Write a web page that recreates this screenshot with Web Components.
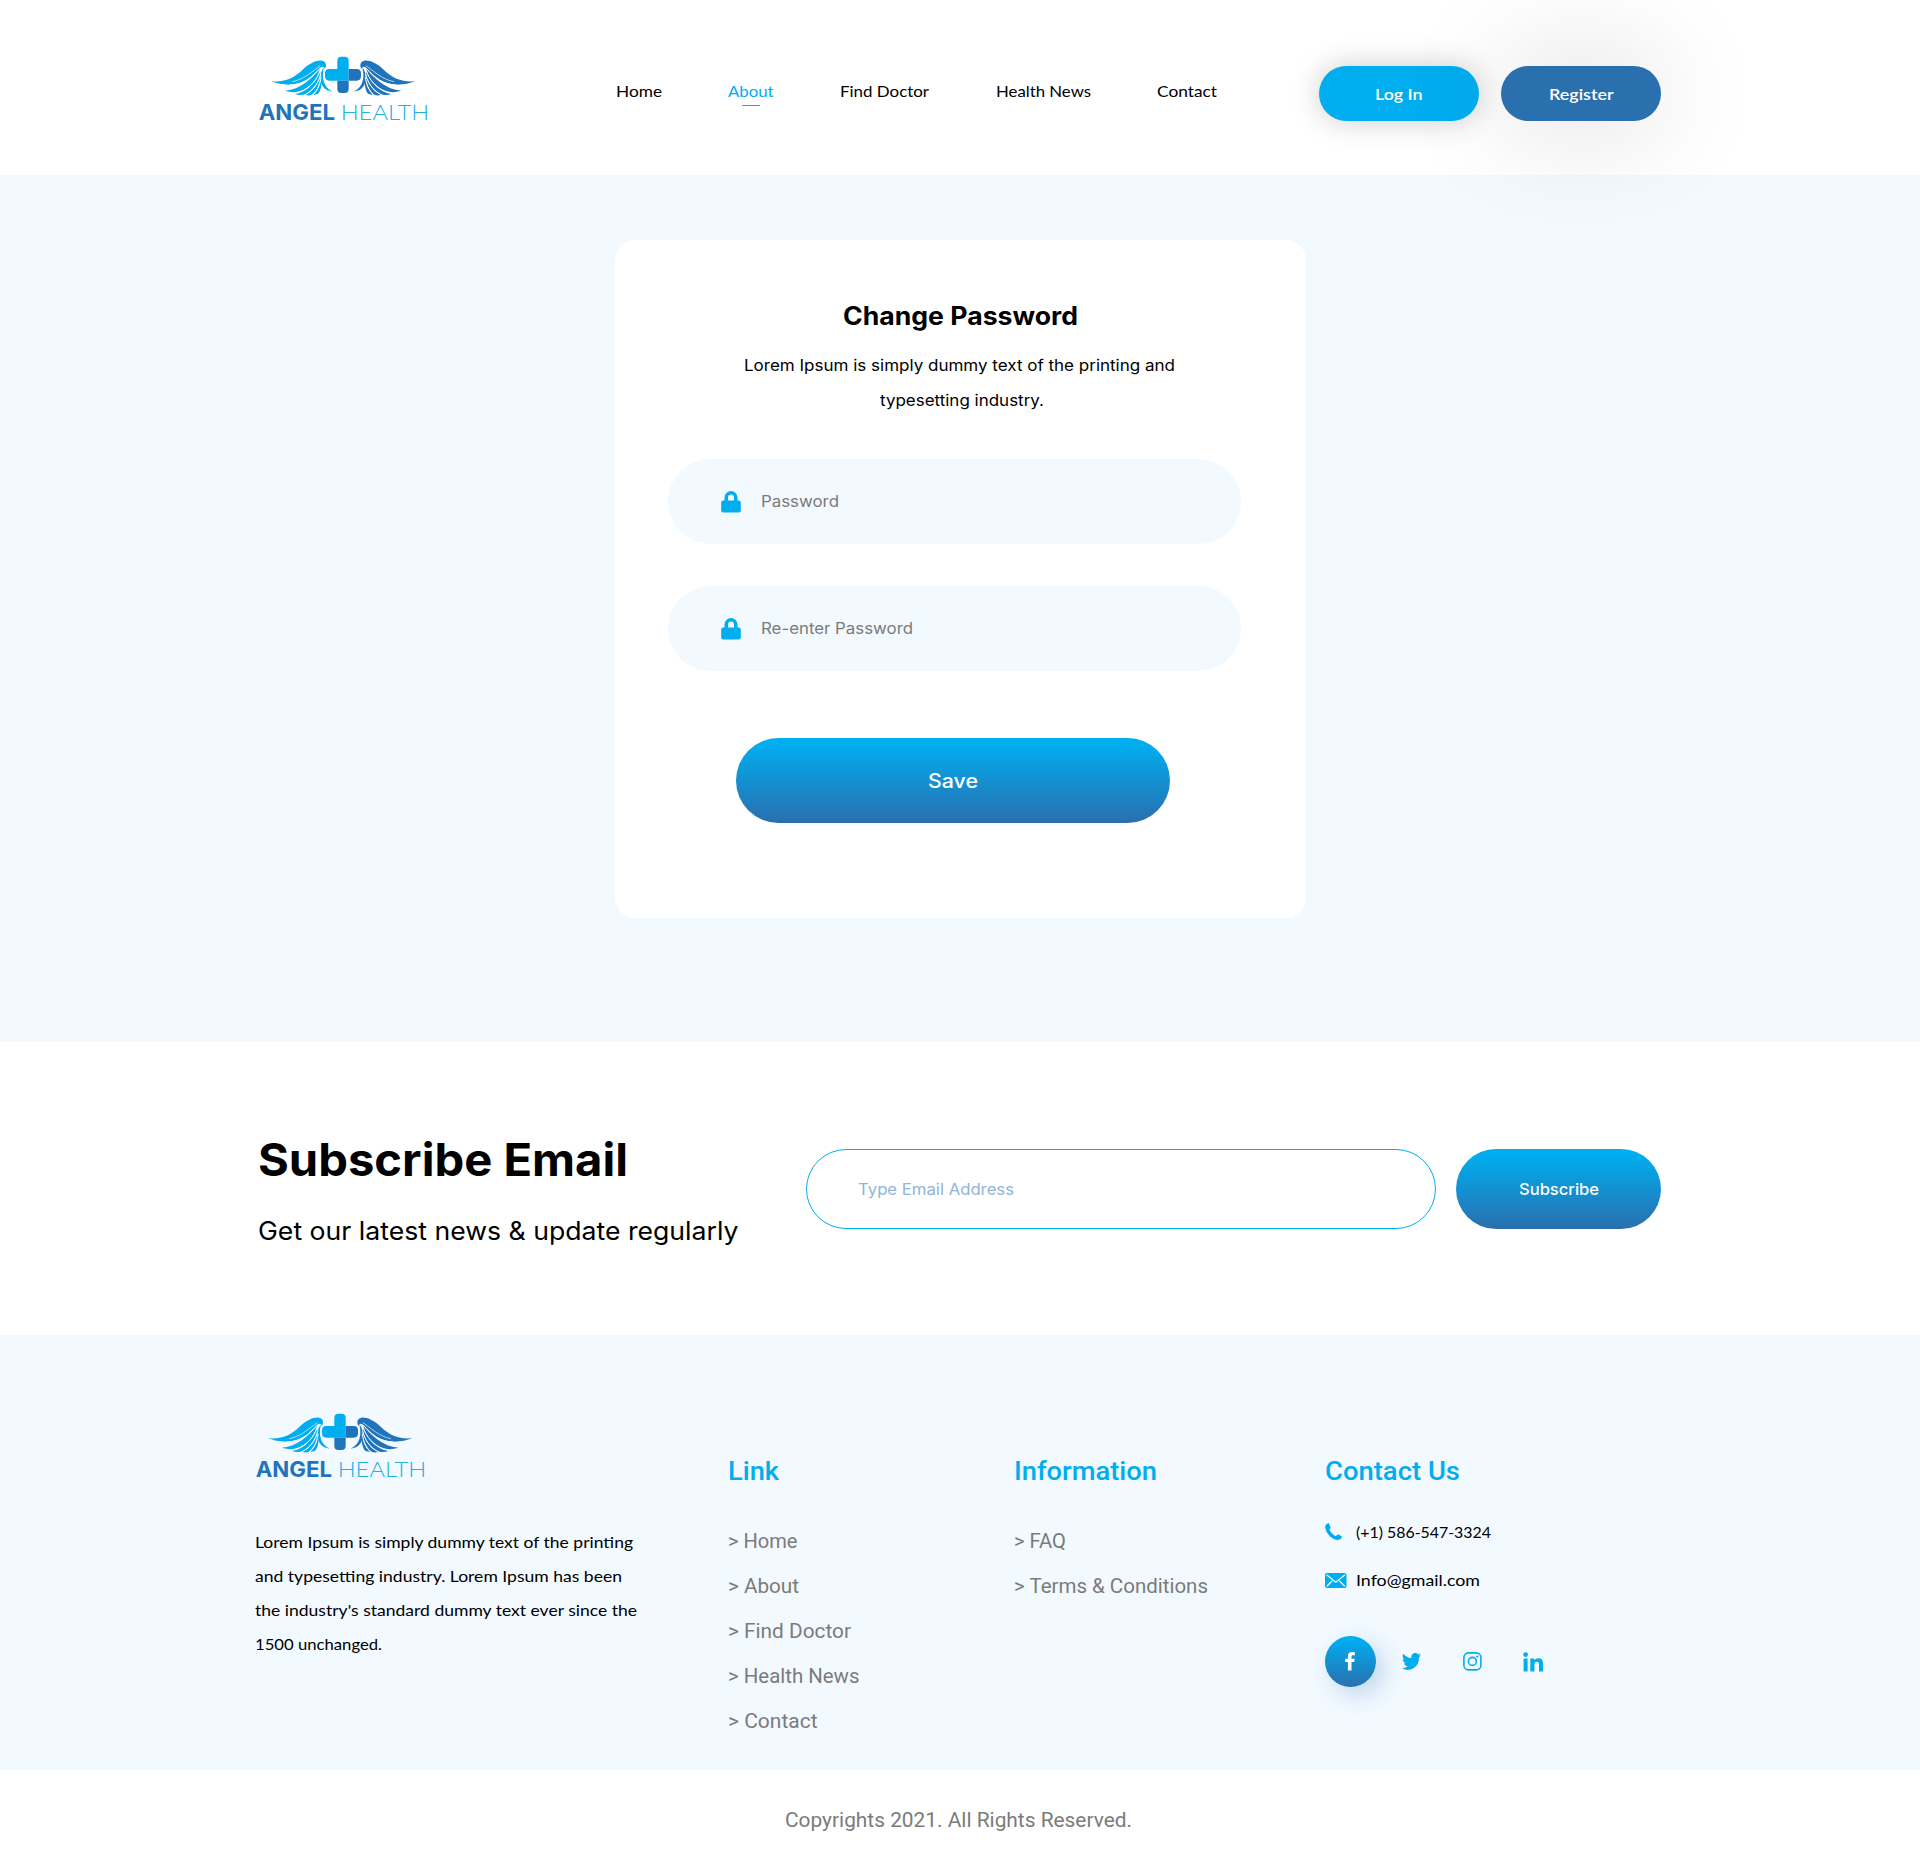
<!DOCTYPE html>
<html lang="en">
<head>
<meta charset="utf-8">
<title>Angel Health - Change Password</title>
<style>
  html, body { margin: 0; padding: 0; background: #fff; }
  body {
    --cyan: #00adef; --navy: #2a6fae; --pale: #f2f9ff; --grey: #7b7b7b;
    --quick: Lato, "Open Sans", sans-serif;
    --pop: Inter, "Open Sans", sans-serif;
    --rubik: Roboto, "Open Sans", sans-serif;
    color: #000; font: 16px/24px var(--quick);
  }
</style>
</head>
<body>
<angel-page></angel-page>
<script>
const define = (name, html, setup) => customElements.define(name, class extends HTMLElement {
  connectedCallback() {
    if (this.shadowRoot) return;
    this.attachShadow({ mode: 'open' }).innerHTML = html;
    if (setup) setup(this, this.shadowRoot);
  }
});

define('angel-page', `
<style>:host{display:flex;flex-direction:column;width:1920px;height:1870px;overflow:hidden}</style>
<site-header></site-header>
<password-section></password-section>
<subscribe-section></subscribe-section>
<site-footer></site-footer>
<copy-bar></copy-bar>`);

define('brand-logo', `
<style>:host{display:block;width:210px;height:100px} svg{display:block}
.a{font:700 65px Inter,sans-serif;fill:#1f74bb}.h{font:300 65px Lato,sans-serif;fill:#21b1e4}</style>
<svg width="210" height="100" viewBox="0 0 630 300">
  <defs>
    <g id="wing">
      <path d="M94 124C140 127 164 112 187 90C208 70 230 60 246 62C258 64 261 75 255 87C252 79 246 78 241 83C222 104 194 134 148 134C126 134 108 130 94 124Z"/>
      <path d="M135 152C182 148 214 116 240 86C238 106 212 147 173 155C160 158 148 156 135 152Z"/>
      <path d="M165 162C201 157 223 126 241 95C241 116 220 156 190 164C182 166 174 165 165 162Z"/>
      <path d="M194 165C221 155 232 132 242 106C244 126 231 156 214 165C208 167 202 166 194 165Z"/>
      <path d="M220 164C236 150 240 134 243 118C247 136 241 153 236 160C231 164 226 165 220 164Z"/>
      <path d="M252 82C244 112 250 143 278 155C255 153 236 136 243 100C245 92 248 87 252 82Z"/>
      <g fill="none" stroke="var(--logo-bg,#fff)" stroke-width="3" stroke-linecap="round">
        <path d="M150 135C190 134 216 112 239 86M176 157C211 147 232 118 240 92M194 165C224 150 236 126 242 104M218 165C234 150 240 130 243 112"/>
        <path d="M158 125C196 117 218 92 240 78" stroke-width="2"/>
      </g>
    </g>
  </defs>
  <use href="#wing" fill="#00adef"/>
  <use href="#wing" fill="#1f74bb" transform="translate(619 0) scale(-1 1)"/>
  <path fill="#00adef" d="M292 62q0-12 12-12h10q12 0 12 12v60H268q-13 0-13-13v-9q0-13 13-13h24z"/>
  <path fill="#1f74bb" d="M326 87h24q13 0 13 13v9q0 13-13 13h-24zM292 122h34v25q0 12-12 12h-10q-12 0-12-12z"/>
  <text class="a" x="56" y="240" textLength="229" lengthAdjust="spacingAndGlyphs">ANGEL</text>
  <text class="h" x="302" y="240" textLength="266" lengthAdjust="spacingAndGlyphs">HEALTH</text>
</svg>`);

define('nav-item', `
<style>
:host{display:flex;flex-direction:column;align-items:flex-start;font:400 16px/24px var(--quick)}
:host([active]){color:var(--cyan)}
i{display:none;width:18px;height:1px;margin:2px 0 0 14px;background:var(--cyan)}
:host([active]) i{display:block}
</style><slot></slot><i></i>`);

define('pill-button', `
<style>
:host{display:flex;align-items:center;justify-content:center;box-sizing:border-box;color:#fff;border-radius:100px;
background:linear-gradient(#00adef 8%,#2a6fae)}
</style><slot></slot>`);

define('site-header', `
<style>
:host{display:flex;align-items:flex-start;box-sizing:border-box;height:175px;padding:0 259px 0 240px;background:#fff;position:relative;z-index:1}
brand-logo{margin-top:40px}
nav{display:grid;grid-template-columns:112px 111.5px 156px 161.5px 60px;margin:79px 0 0 166px}
.actions{display:flex;gap:22px;margin:66px 0 0 auto}
pill-button{width:160px;height:55px;font:600 16px/24px var(--quick)}
.login{background:#00adef;box-shadow:0 0 30px rgba(0,0,0,.2)}
.register{background:#2a6fae;box-shadow:0 0 110px rgba(0,0,0,.18)}
</style>
<brand-logo></brand-logo>
<nav>
  <nav-item><fit-text w="46">Home</fit-text></nav-item>
  <nav-item active><fit-text w="45.5">About</fit-text></nav-item>
  <nav-item><fit-text w="89">Find Doctor</fit-text></nav-item>
  <nav-item><fit-text w="95">Health News</fit-text></nav-item>
  <nav-item><fit-text w="60">Contact</fit-text></nav-item>
</nav>
<div class="actions">
  <pill-button class="login"><fit-text w="47.5">Log In</fit-text></pill-button>
  <pill-button class="register"><fit-text w="64.5">Register</fit-text></pill-button>
</div>`);

define('lock-field', `
<style>
:host{display:flex;align-items:center;box-sizing:border-box;width:573px;height:85px;padding-left:53px;border-radius:43px;background:var(--pale);
color:var(--grey);font:400 16px/24px var(--pop)}
svg{display:block;margin-right:20px}
::slotted(*){margin-top:-1px}
</style>
<svg width="20" height="22" viewBox="0 0 20 22"><path fill="#00adef" d="M3.500 9.600V6.500a6.500 6.500 0 0 1 13 0v3.100h1.300a2 2 0 0 1 2 2v8a2 2 0 0 1-2 2H2.200a2 2 0 0 1-2-2v-8a2 2 0 0 1 2-2zM7 9.600h6V6.500a3 3 0 0 0-6 0z"/></svg>
<slot></slot>`);

define('password-section', `
<style>
:host{display:flex;justify-content:center;align-items:flex-start;box-sizing:border-box;height:867px;padding:65px 0 0 1px;background:var(--pale)}
.card{display:flex;flex-direction:column;align-items:center;box-sizing:border-box;width:691px;height:678px;padding-top:60px;border-radius:20px;background:#fff}
h1{margin:0;font:700 25px/32px var(--pop)}
p{margin:16px 3px 0 0;font:400 16px/35px var(--pop);display:flex;flex-direction:column;align-items:center}
p fit-text + fit-text{margin-left:5px}
lock-field{margin-right:13px}
.one{margin-top:41px}.two{margin-top:42px}
pill-button{width:434px;height:85px;margin:67px 15px 0 0;padding-top:1px;font:500 20px/28px var(--pop)}
</style>
<div class="card">
  <h1><fit-text w="235">Change Password</fit-text></h1>
  <p><fit-text w="431">Lorem Ipsum is simply dummy text of the printing and</fit-text><fit-text w="164">typesetting industry.</fit-text></p>
  <lock-field class="one"><fit-text w="78">Password</fit-text></lock-field>
  <lock-field class="two"><fit-text w="152">Re-enter Password</fit-text></lock-field>
  <pill-button><fit-text w="50">Save</fit-text></pill-button>
</div>`);

define('subscribe-section', `
<style>
:host{display:flex;align-items:flex-start;box-sizing:border-box;height:293px;padding:0 259px 0 258px;background:#fff;font-family:var(--pop)}
.copy{width:548px;padding-top:90px}
h2{margin:0;font:700 45px/56px var(--pop)}
p{margin:25px 0 0;font:400 25px/36px var(--pop)}
.mail{display:flex;align-items:center;box-sizing:border-box;width:630px;height:80px;margin-top:107px;padding-left:51px;border:1px solid #00adef;border-radius:40px;
color:#8fb5da;font:400 16px/24px var(--pop)}
pill-button{width:205px;height:80px;margin:107px 0 0 auto;font:500 16px/24px var(--pop)}
</style>
<div class="copy">
  <h2><fit-text w="370">Subscribe Email</fit-text></h2>
  <p><fit-text w="480.5">Get our latest news &amp; update regularly</fit-text></p>
</div>
<div class="mail"><fit-text w="156">Type Email Address</fit-text></div>
<pill-button><fit-text w="80">Subscribe</fit-text></pill-button>`);

define('footer-column', `
<style>
:host{display:flex;flex-direction:column}
h3{margin:0 0 31px;color:var(--cyan);font:500 25px/32px var(--rubik)}
.body{display:flex;flex-direction:column;font:400 20px/45px var(--rubik);color:var(--grey)}
</style><h3><slot name="title"></slot></h3><div class="body"><slot></slot></div>`);

define('contact-block', `
<style>
:host{display:flex;flex-direction:column;margin-top:1px;color:#000;font:400 16px/24px var(--quick)}
.row{display:flex;align-items:center;height:24px}
.row svg{display:block;flex:none}
.mailrow{margin-top:24px}
.social{display:flex;align-items:center;height:51px;margin-top:44px}
.fb{display:flex;align-items:center;justify-content:center;width:51px;height:51px;border-radius:50%;background:linear-gradient(#00adef 8%,#2a6fae);
box-shadow:8px 8px 22px rgba(42,111,174,.24)}
svg{display:block;fill:var(--cyan)}
</style>
<div class="row"><svg width="17" height="17" viewBox="0 0 17 17" style="margin-right:14px;margin-top:-2px"><path d="M3.100.200C1.200 1 0 2.400.200 4.500c.500 3 2.100 6 4.500 8.400 2.600 2.500 5.600 4 8.300 4 1.900 0 3.200-1 3.900-2.800.1-.3 0-.6-.3-.8l-3.300-1.800c-.4-.2-.8-.1-1.100.2l-1.100 1.400C9.200 12.700 5.900 9.800 4.400 6.400l1-1.100c.3-.3.3-.7.1-1.100L4 .500C3.800.2 3.500.1 3.100.2Z"/></svg><fit-text w="135">(+1) 586-547-3324</fit-text></div>
<div class="row mailrow"><svg width="22" height="15" viewBox="0 0 22 15" style="margin-right:9px;margin-top:1px"><rect width="21.500" height="15" rx="2"/><path d="M1.500 1.800 10.800 9.200 20 1.800M1.800 13.300 7.300 7.800M19.700 13.300 14.200 7.800" fill="none" stroke="#f2f9ff" stroke-width="1.300"/></svg><fit-text w="124">Info@gmail.com</fit-text></div>
<div class="social">
  <div class="fb"><svg width="10" height="19" viewBox="0 0 10 19" style="fill:#fff"><path d="M2.900 18.500V10H.2V6.700h2.700V4.200C2.900 1.500 4.600.100 7 .100c1.200 0 2.400.1 2.900.2v3H8.100c-1.300 0-1.600.7-1.600 1.600v1.800h3.200L9.200 10H6.500v8.500z"/></svg></div>
  <svg width="19" height="17" viewBox="0 0 24 20" preserveAspectRatio="none" style="margin-left:26px"><path d="M24 2.400a10 10 0 0 1-2.800.8A5 5 0 0 0 23.300.400a10 10 0 0 1-3.100 1.200 4.900 4.900 0 0 0-8.400 4.500A14 14 0 0 1 1.700 1a4.900 4.900 0 0 0 1.500 6.600 5 5 0 0 1-2.200-.6 4.900 4.900 0 0 0 3.900 4.900 5 5 0 0 1-2.200.1 4.900 4.900 0 0 0 4.600 3.400A9.900 9.900 0 0 1 0 17.500a14 14 0 0 0 21.500-12.400A10 10 0 0 0 24 2.400z"/></svg>
  <svg width="19" height="19" viewBox="0 0 19 19" style="margin-left:42px"><g fill="none" stroke="#00adef" stroke-width="1.600"><rect x=".9" y=".9" width="17" height="17" rx="4.600"/><circle cx="9.400" cy="9.400" r="4"/></g><circle cx="14.300" cy="4.600" r="1.100"/></svg>
  <svg width="21" height="20" viewBox="0 0 21 20" style="margin-left:41px"><circle cx="2.600" cy="2.600" r="2.400"/><path d="M.6 6.600h4v12.900h-4zM7.300 6.600h3.900v1.800c.6-1.100 2-2.100 4-2.100 4.100 0 4.900 2.600 4.900 6.100v7.100H16V13c0-1.500 0-3.300-2.100-3.300s-2.500 1.600-2.500 3.200v6.600H7.300z"/></svg>
</div>`);

define('site-footer', `
<style>
:host{display:flex;align-items:flex-start;box-sizing:border-box;height:435px;padding-left:237px;background:var(--pale)}
.about{width:491px;padding-top:62px;--logo-bg:#f2f9ff}
p{margin:28px 0 0 18px;font:400 16px/34px var(--quick)}
footer-column{margin-top:121px}
.link{width:286px}.info{width:310.500px}
</style>
<div class="about">
  <brand-logo></brand-logo>
  <p><fit-text w="378">Lorem Ipsum is simply dummy text of the printing</fit-text>
  <fit-text w="367">and typesetting industry. Lorem Ipsum has been</fit-text>
  <fit-text w="382">the industry's standard dummy text ever since the</fit-text>
  <fit-text w="127">1500 unchanged.</fit-text></p>
</div>
<footer-column class="link"><fit-text slot="title" w="51">Link</fit-text>
  <fit-text w="69.500">&gt; Home</fit-text><fit-text w="71">&gt; About</fit-text><fit-text w="123">&gt; Find Doctor</fit-text><fit-text w="131.500">&gt; Health News</fit-text><fit-text w="89.500">&gt; Contact</fit-text></footer-column>
<footer-column class="info"><fit-text slot="title" w="143">Information</fit-text>
  <fit-text w="52">&gt; FAQ</fit-text><fit-text w="194">&gt; Terms &amp; Conditions</fit-text></footer-column>
<footer-column><fit-text slot="title" w="135">Contact Us</fit-text><contact-block></contact-block></footer-column>`);

define('copy-bar', `
<style>:host{display:flex;justify-content:center;box-sizing:border-box;height:100px;padding:34px 4px 0 0;background:#fff;color:var(--grey);font:400 20px/32px var(--rubik)}</style>
<fit-text w="347">Copyrights 2021. All Rights Reserved.</fit-text>`);

// Widens or narrows its glyphs so that the line takes exactly `w` pixels.
define('fit-text', `
<style>:host{display:block;white-space:nowrap} span{display:inline-block;transform-origin:0 50%}</style><span><slot></slot></span>`,
(host, root) => {
  const span = root.querySelector('span');
  const target = parseFloat(host.getAttribute('w'));
  host.style.width = target + 'px';
  span.style.transform = 'scaleX(' + target / span.getBoundingClientRect().width + ')';
});
</script>
</body>
</html>
